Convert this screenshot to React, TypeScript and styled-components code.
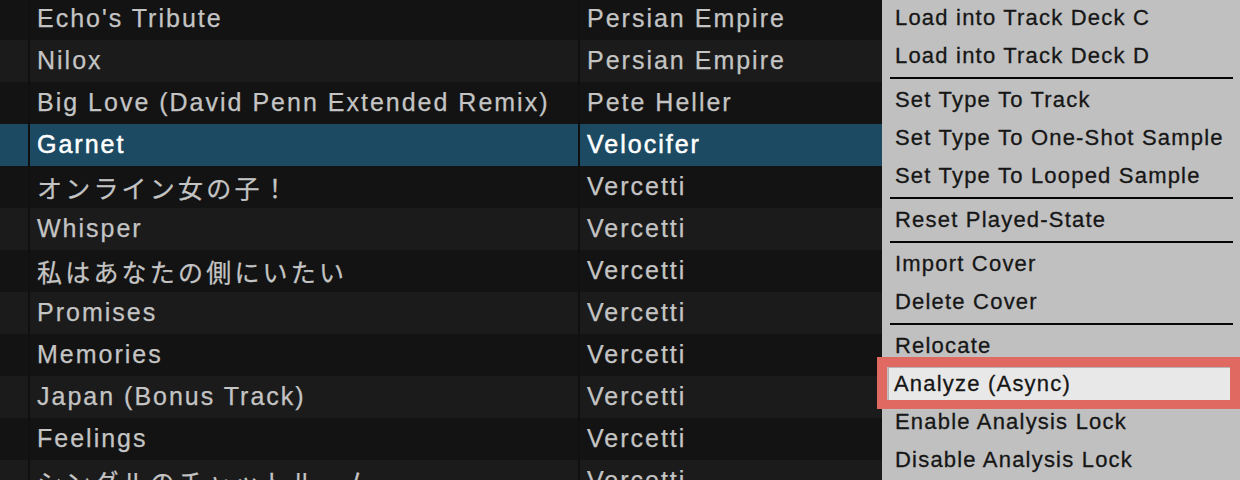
import React from "react"
import styled, { createGlobalStyle } from "styled-components"

const GlobalStyle = createGlobalStyle`
  html, body {
    margin: 0;
    padding: 0;
    background: #131313;
    overflow: hidden;
  }
  body {
    width: 1240px;
    height: 480px;
  }
`

const Screen = styled.div`
  position: relative;
  width: 1240px;
  height: 480px;
  overflow: hidden;
  display: grid;
  grid-template-columns: 882px 1fr;
  font-family: "Liberation Sans", Arial, "Noto Sans CJK JP", sans-serif;
`

const Table = styled.div`
  display: flex;
  flex-direction: column;
  margin-top: -2px;
  min-width: 0;
`

const Row = styled.div<{ $odd: boolean; $selected?: boolean }>`
  display: grid;
  grid-template-columns: 30px 550px 1fr;
  height: 42px;
  flex-shrink: 0;
  background: ${(p) => (p.$selected ? "#1d4a63" : p.$odd ? "#1b1b1b" : "#131313")};
  color: ${(p) => (p.$selected ? "#ffffff" : "#c4c4c4")};
  -webkit-text-stroke: ${(p) => (p.$selected ? "0.5px #ffffff" : "0.25px #c4c4c4")};
`

const Cell = styled.div<{ $divider?: boolean; $cjk?: boolean }>`
  display: flex;
  align-items: center;
  padding-left: 7px;
  padding-bottom: 1px;
  font-size: 25px;
  letter-spacing: ${(p) => (p.$cjk ? "3.2px" : "2px")};
  white-space: nowrap;
  overflow: hidden;
  border-right: ${(p) => (p.$divider ? "2px solid #101010" : "none")};
`

const IndexCell = styled.div`
  border-right: 2px solid #101010;
`

const Menu = styled.div`
  background: #c0c0c0;
  display: flex;
  flex-direction: column;
  margin-top: -1px;
  padding: 0 7px 0 8px;
  font-family: "Liberation Sans", Arial, sans-serif;
`

const Item = styled.div<{ $hover?: boolean }>`
  height: 38px;
  flex-shrink: 0;
  display: flex;
  align-items: center;
  padding-left: 5px;
  font-size: 22px;
  letter-spacing: 1.2px;
  color: #161616;
  -webkit-text-stroke: 0.3px #161616;
  white-space: nowrap;
  ${(p) =>
    p.$hover
      ? `
    background: #e8e8e8;
    box-shadow: inset 0 0 0 1px #b4b4b4;
    margin: 2px -3px 2px -2px;
    height: 34px;
    padding-left: 6px;
  `
      : ""}
`

const Separator = styled.div`
  height: 6px;
  flex-shrink: 0;
  display: flex;
  align-items: center;
  &::after {
    content: "";
    display: block;
    width: 100%;
    height: 2px;
    background: #050505;
  }
`

const Callout = styled.div`
  position: absolute;
  left: 877px;
  top: 357px;
  width: 363px;
  height: 52px;
  box-sizing: border-box;
  border: 10px solid #e06a61;
  border-bottom-width: 9px;
  pointer-events: none;
`

const tracks: [string, string][] = [
  ["Echo's Tribute", "Persian Empire"],
  ["Nilox", "Persian Empire"],
  ["Big Love (David Penn Extended Remix)", "Pete Heller"],
  ["Garnet", "Velocifer"],
  ["オンライン女の子！", "Vercetti"],
  ["Whisper", "Vercetti"],
  ["私はあなたの側にいたい", "Vercetti"],
  ["Promises", "Vercetti"],
  ["Memories", "Vercetti"],
  ["Japan (Bonus Track)", "Vercetti"],
  ["Feelings", "Vercetti"],
  ["シングルのチャットルーム", "Vercetti"],
]

type MenuEntry = { label: string; hover?: boolean } | "sep"

const menu: MenuEntry[] = [
  { label: "Load into Track Deck C" },
  { label: "Load into Track Deck D" },
  "sep",
  { label: "Set Type To Track" },
  { label: "Set Type To One-Shot Sample" },
  { label: "Set Type To Looped Sample" },
  "sep",
  { label: "Reset Played-State" },
  "sep",
  { label: "Import Cover" },
  { label: "Delete Cover" },
  "sep",
  { label: "Relocate" },
  { label: "Analyze (Async)", hover: true },
  { label: "Enable Analysis Lock" },
  { label: "Disable Analysis Lock" },
]

const isCjk = (s: string) => /[\u3040-\u30ff\u4e00-\u9fff]/.test(s)

const App: React.FC = () => {
  return (
    <>
      <GlobalStyle />
      <Screen>
        <Table>
          {tracks.map(([title, artist], i) => (
            <Row key={i} $odd={i % 2 === 1} $selected={title === "Garnet"}>
              <IndexCell />
              <Cell $divider $cjk={isCjk(title)}>
                {title}
              </Cell>
              <Cell>{artist}</Cell>
            </Row>
          ))}
        </Table>
        <Menu>
          {menu.map((m, i) =>
            m === "sep" ? (
              <Separator key={i} />
            ) : (
              <Item key={i} $hover={m.hover}>
                {m.label}
              </Item>
            )
          )}
        </Menu>
        <Callout />
      </Screen>
    </>
  )
}

export default App
